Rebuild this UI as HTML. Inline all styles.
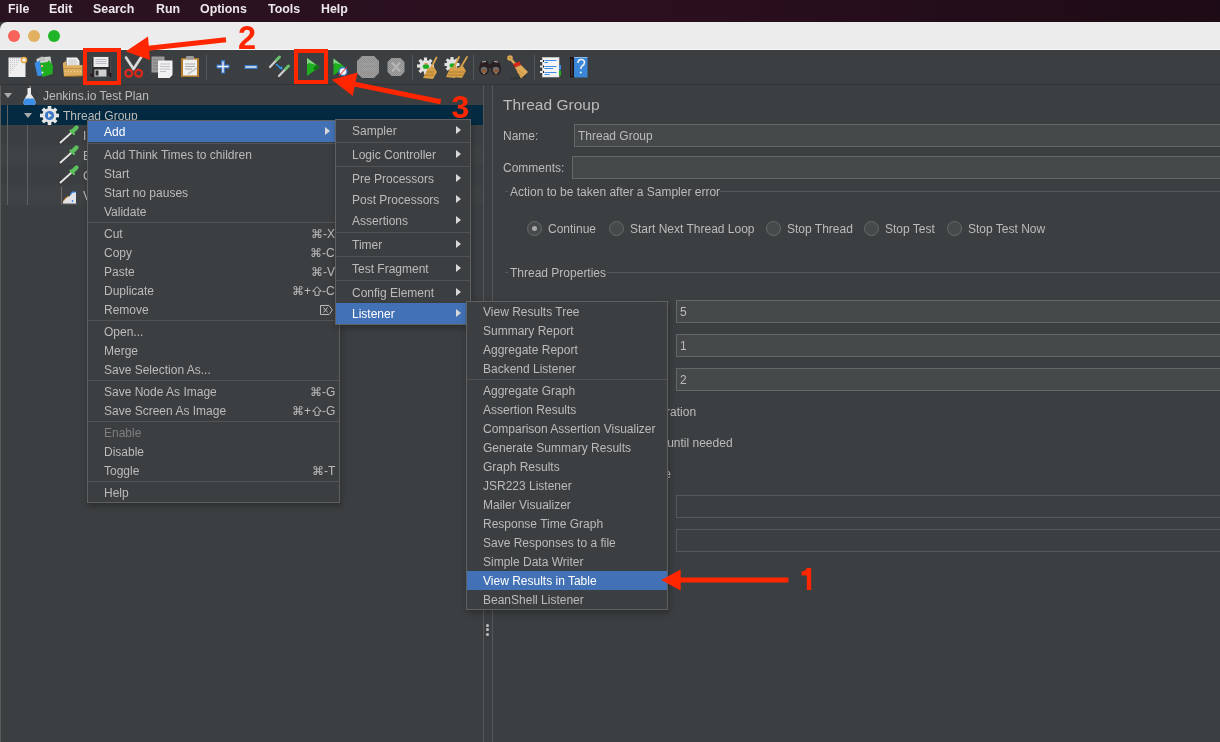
<!DOCTYPE html>
<html><head><meta charset="utf-8">
<style>
*{margin:0;padding:0;box-sizing:border-box}
html,body{width:1220px;height:742px;overflow:hidden;background:#3c3f41;-webkit-font-smoothing:antialiased;font-family:"Liberation Sans",sans-serif;color:#bbbbbb;font-size:12px}
.a{position:absolute}
.t{position:absolute;white-space:nowrap;will-change:transform;font-size:12px;line-height:19px;height:19px;margin-top:1px}
#menubar{left:0;top:0;width:1220px;height:22px;background:linear-gradient(90deg,#2a1321 0%,#2b0f1f 55%,#1d0b15 100%)}
#menubar span{position:absolute;will-change:transform;top:1px;line-height:17px;font-weight:bold;font-size:12.4px;color:#ece8ea}
#titlebar{left:0;top:22px;width:1220px;height:28px;background:#ececec;border-top-left-radius:7px}
.dot{position:absolute;width:12px;height:12px;border-radius:50%;top:30px}
#toolbar{left:0;top:50px;width:1220px;height:34px;background:#3c3f41}
.sep{position:absolute;top:55px;width:1px;height:25px;background:#55585a}
.hl{background:#4272b5;color:#ffffff}
.menu{position:absolute;background:#3c3f41;border:1px solid #5e6062}
.msep{position:absolute;height:1px;background:#515355}
.field{position:absolute;background:#45494a;border:1px solid #646768}
.radio{position:absolute;width:15px;height:15px;border-radius:50%;border:1px solid #666a6a;background:#464a4a}
.arrow{position:absolute;width:0;height:0;border-top:4px solid transparent;border-bottom:4px solid transparent;border-left:5px solid #d8d8d8}
</style></head><body>
<div id="menubar" class="a">
<span style="left:8px">File</span>
<span style="left:49px">Edit</span>
<span style="left:93px">Search</span>
<span style="left:156px">Run</span>
<span style="left:200px">Options</span>
<span style="left:268px">Tools</span>
<span style="left:321px">Help</span>
</div>
<div id="titlebar" class="a"></div>
<div class="a" style="left:0;top:49px;width:1220px;height:1px;background:#f8f8f8"></div>
<div class="a" style="left:0;top:50px;width:1220px;height:1px;background:#1c1418"></div>
<div class="dot" style="left:8px;background:#f8645a"></div>
<div class="dot" style="left:28px;background:#e2b160"></div>
<div class="dot" style="left:48px;background:#1fb526"></div>
<div id="toolbar" class="a"></div>
<div class="a" style="left:0;top:84px;width:1220px;height:1px;background:#313335"></div>

<!-- TOOLBAR_ICONS -->
<svg class="a" style="left:0;top:0" width="600" height="90" viewBox="0 0 600 90">
<!-- new doc -->
<defs><pattern id="ddot" width="2" height="2" patternUnits="userSpaceOnUse"><rect width="2" height="2" fill="#ececec"/><rect width="1" height="1" fill="#c9c9cf"/></pattern></defs>
<rect x="8.5" y="57.5" width="17" height="19.5" fill="#efefef"/>
<path d="M9 58 L22 58 L9 75 Z" fill="url(#ddot)"/>
<circle cx="24" cy="60" r="2.6" fill="#f8f2e8" stroke="#e3a748" stroke-width="1.5"/>
<!-- templates -->
<path d="M36.5 59 L42 56.5 L47 58 L47 63 L37 64 Z" fill="#d6d6d6"/>
<path d="M44 57 L50.5 56.5 L51.5 64 L45 64 Z" fill="#cfcfcf"/>
<path d="M38 58.5 L44 57.5 M39 60.5 L45 59.5" stroke="#9a9a9a" stroke-width="0.8"/>
<path d="M34.5 63 L40 60.5 L42.5 75.5 L37.5 76 Z" fill="#3a8ee6"/>
<path d="M40 63 L47.5 62 L49 60 L53 66 L52.5 74 L42.5 77 Z" fill="#1fae22"/>
<circle cx="42.5" cy="72.5" r="0.9" fill="#fff"/>
<rect x="41" y="65" width="2" height="2" fill="#f0b890"/>
<!-- open -->
<path d="M66.5 57.5 L77 57.5 L79.5 61 L79.5 67 L66.5 67 Z" fill="#f2f2f2"/>
<path d="M68.5 60h8M68.5 62h9M68.5 64h9" stroke="#b8b8b8" stroke-width="0.8"/>
<path d="M63 65.5 L82.5 65 L82.5 76 L64 77 Z" fill="#dcae5e"/>
<path d="M63 63 L66 61 L66 66 L63 66 Z" fill="#dcae5e"/>
<path d="M64 68.5 L82 68.5" stroke="#c8944a" stroke-width="1"/>
<path d="M65 71.5h1M68 71.5h1M71 71.5h1M74 71.5h1M77 71.5h1M80 71.5h1" stroke="#f2d49a" stroke-width="1"/>
<path d="M64 76.5 L82 76" stroke="#8a5f22" stroke-width="1.2"/>
<!-- save -->
<path d="M91.5 57 L110.5 57 L110.5 76.5 L91.5 76.5 Z" fill="#2c2c2e" stroke="#555" stroke-width="0.6"/>
<rect x="93.5" y="57" width="15" height="10" fill="#ececec"/>
<path d="M95.5 59.5h11M95.5 61.5h11M95.5 63.5h11" stroke="#a8a8b8" stroke-width="0.7"/>
<rect x="94.5" y="69.5" width="12" height="7" fill="#d0d0d0"/>
<rect x="95.5" y="70.5" width="3" height="5" fill="#2e2e2e"/>
<path d="M90.5 74 L93 77 M110.5 73 L110.5 77" stroke="#200810" stroke-width="1.2"/>
<!-- scissors -->
<path d="M126 57.5 L133.5 69 M141 57.5 L133.5 69" stroke="#555" stroke-width="3.6" stroke-linecap="round"/>
<path d="M126 57.5 L133.5 69 M141 57.5 L133.5 69" stroke="#dcdcdc" stroke-width="2.4" stroke-linecap="round"/>
<circle cx="128.8" cy="73.2" r="3.4" fill="none" stroke="#e0281a" stroke-width="2.2"/>
<circle cx="138.6" cy="73.2" r="3.4" fill="none" stroke="#e0281a" stroke-width="2.2"/>
<!-- copy -->
<rect x="151.5" y="56.5" width="13" height="16" fill="#9a9a9a"/>
<path d="M153 60h9M153 63h9M153 66h9M153 69h9" stroke="#7e7e7e" stroke-width="1"/>
<path d="M158 60.5 L172.5 60.5 L172.5 75 L169.5 78 L158 78 Z" fill="#f2f2f2"/>
<path d="M160 64h10M160 66.5h10M160 69h10M160 71.5h6" stroke="#b0b0bb" stroke-width="0.8"/>
<!-- paste -->
<rect x="181" y="58" width="18" height="19" fill="#b07a2c"/>
<rect x="183" y="59.5" width="14" height="16" fill="#f0f0f0"/>
<rect x="186" y="56" width="8" height="3.5" rx="1" fill="#9a9a9a"/>
<path d="M185 64h10M185 66.5h10M185 69h7" stroke="#a8a8a8" stroke-width="1"/>
<path d="M188 74 L197 68" stroke="#c8c8c8" stroke-width="2"/>
<!-- sep -->
<rect x="206" y="55" width="1" height="25" fill="#55585a"/>
<!-- plus -->
<path d="M216.5 66.5h13M223 60v13.5" stroke="#3a78c8" stroke-width="4"/>
<path d="M217.5 66.5h11M223 61.5v11" stroke="#f4f4f4" stroke-width="1.4"/>
<!-- minus -->
<rect x="244.5" y="65" width="13" height="4" fill="#3a78c8"/>
<rect x="245.5" y="66.3" width="11" height="1.4" fill="#f4f4f4"/>
<!-- toggle pipettes -->
<path d="M270 67 L277 59.5" stroke="#d0d0d0" stroke-width="2.2" stroke-linecap="round"/>
<path d="M276.5 60 L279.5 57" stroke="#6ac36a" stroke-width="3" stroke-linecap="round"/>
<path d="M279 76 L286 68.5" stroke="#d0d0d0" stroke-width="2.2" stroke-linecap="round"/>
<path d="M285.5 69 L288.5 66" stroke="#6ac36a" stroke-width="3" stroke-linecap="round"/>
<path d="M276 64 L281 68.5" stroke="#2f9af0" stroke-width="1.2"/>
<path d="M279 69 L282.5 69.5 L282 66 Z" fill="#2f9af0"/>
<!-- play -->
<path d="M307 58 L319.5 67 L307 76 Z" fill="#1fae1f"/>
<path d="M307 58 L316.5 65 L309 63 L307 64 Z" fill="#86cf86"/>
<path d="M313 68.5 L316 65 L319.5 67 L315.5 70.5 Z" fill="#0b760b"/>
<!-- start no pauses -->
<path d="M333.5 58.5 L345 67 L333.5 75.5 Z" fill="#1fae1f"/>
<path d="M333.5 58.5 L341 64.5 L335 63 L333.5 64 Z" fill="#86cf86"/>
<circle cx="343" cy="71.5" r="4" fill="#f4f4f4" stroke="#3a78c8" stroke-width="1.3"/>
<path d="M339 76 L347 67" stroke="#e02020" stroke-width="1"/>
<!-- stop octagon -->
<defs><pattern id="dith" width="2" height="2" patternUnits="userSpaceOnUse"><rect width="2" height="2" fill="#a2a2a2"/><rect width="1" height="1" fill="#8a8a8a"/><rect x="1" y="1" width="1" height="1" fill="#8e8e8e"/></pattern></defs>
<path d="M362 56 L374 56 L379 61 L379 73 L374 78 L362 78 L357 73 L357 61 Z" fill="url(#dith)"/>
<path d="M361 64h14M361 69h14" stroke="#b0b0b0" stroke-width="0.8" opacity="0.6"/>
<!-- shutdown -->
<path d="M391.5 58 L400.5 58 L404.5 62 L404.5 72 L400.5 76 L391.5 76 L387.5 72 L387.5 62 Z" fill="url(#dith)"/>
<path d="M392 62.5 L400 71.5 M400 62.5 L392 71.5" stroke="#b4b4b4" stroke-width="2.4"/>
<!-- sep -->
<rect x="412" y="55" width="1" height="25" fill="#55585a"/>
<!-- clear -->
<g transform="translate(425.5,66)">
<g fill="#e2e2e2">
<circle r="6"/>
<rect x="-1.6" y="-8.5" width="3.2" height="17"/>
<rect x="-8.5" y="-1.6" width="17" height="3.2"/>
<rect x="-1.6" y="-8.5" width="3.2" height="17" transform="rotate(45)"/>
<rect x="-1.6" y="-8.5" width="3.2" height="17" transform="rotate(-45)"/>
</g>
<ellipse cx="0.5" cy="0.5" rx="3.2" ry="2.5" fill="#1fae22"/>
<rect x="-1" y="-3" width="3" height="1.5" fill="#e08a50"/>
</g>
<path d="M436.5 57.5 L431 68" stroke="#d9a44e" stroke-width="1.8" stroke-linecap="round"/>
<path d="M428 68 L434 67 L437 72 L433 79 L423 78 Z" fill="#d6a04a"/>
<path d="M427 72 L434 72 M425 75 L434 75" stroke="#a87428" stroke-width="0.8"/>
<!-- clear all -->
<g transform="translate(452,64.5)">
<g fill="#e2e2e2">
<circle r="5.5"/>
<rect x="-1.5" y="-7.5" width="3" height="15"/>
<rect x="-7.5" y="-1.5" width="15" height="3"/>
<rect x="-1.5" y="-7.5" width="3" height="15" transform="rotate(45)"/>
<rect x="-1.5" y="-7.5" width="3" height="15" transform="rotate(-45)"/>
</g>
<ellipse cx="0.5" cy="1" rx="3" ry="2.3" fill="#1fae22"/>
</g>
<path d="M459 57 L454 67 M467 57 L461 67" stroke="#d9a44e" stroke-width="1.8" stroke-linecap="round"/>
<path d="M450 68 L456 66 L458 71 L455 78 L446 77 Z" fill="#d6a04a"/>
<path d="M457 68 L463 66 L466 71 L462 78 L453 77 Z" fill="#d6a04a"/>
<path d="M449 72 L465 72 M448 75 L464 75" stroke="#a87428" stroke-width="0.8"/>
<!-- sep -->
<rect x="473" y="55" width="1" height="25" fill="#55585a"/>
<!-- binoculars -->
<path d="M481 61.5 L487 60.5 L489 64 L491 64 L493 60.5 L499 61.5 L501 68 L479 68 Z" fill="#2a2024"/>
<path d="M482 62 L486 61.5 M494 61.5 L498 62" stroke="#b8b8b8" stroke-width="1.2"/>
<circle cx="484" cy="70" r="5" fill="#2a2024"/>
<circle cx="496" cy="70" r="5" fill="#2a2024"/>
<circle cx="484" cy="70" r="3.3" fill="#6a6a6a"/>
<circle cx="496" cy="70" r="3.3" fill="#6a6a6a"/>
<path d="M481.5 71 Q484 68 486.5 71 Q484 73 481.5 71 Z" fill="#a0521c"/>
<path d="M493.5 71 Q496 68 498.5 71 Q496 73 493.5 71 Z" fill="#a0521c"/>
<circle cx="484" cy="73.5" r="0.8" fill="#e8a040"/>
<circle cx="496" cy="73.5" r="0.8" fill="#e8a040"/>
<!-- broom -->
<ellipse cx="535" cy="77" rx="0" ry="0" fill="none"/>
<path d="M510 78.5 Q516 80 527 76" stroke="#2e3133" stroke-width="2" opacity="0.5"/>
<circle cx="510" cy="58" r="2.8" fill="#dcaa58"/><circle cx="510" cy="58" r="1" fill="#b88838"/>
<path d="M511.5 60 L516 65" stroke="#dcaa58" stroke-width="2.6"/>
<path d="M513 64 L519.5 61.5 L521 65 L515 67.5 Z" fill="#d42a18"/>
<path d="M515 67.5 L521 65 L528 72 L521 78.5 Z" fill="#dcaa58"/>
<path d="M516 69 L524 74 M517 72 L523 77" stroke="#c08a38" stroke-width="0.7"/>
<!-- sep -->
<rect x="534" y="55" width="1" height="25" fill="#55585a"/>
<!-- notebook -->
<rect x="542.5" y="57.5" width="16.5" height="19.5" fill="#f4f4f4" stroke="#d6d6d6" stroke-width="0.6"/>
<path d="M544.5 60.5h12M544.5 62.5h3.5M544.5 66.5h12M544.5 68.5h8.5M544.5 72.5h12M544.5 74.5h5" stroke="#3a8ee6" stroke-width="1"/>
<path d="M540 61h3.5M540 66.5h3.5M540 72h3.5" stroke="#e4e4e4" stroke-width="2.2"/>
<path d="M543.5 60v2M543.5 65.5v2M543.5 71v2" stroke="#222" stroke-width="1"/>
<rect x="559" y="65" width="2" height="4.5" fill="#3a8ee6"/>
<rect x="559" y="70.5" width="2" height="5" fill="#1fae22"/>
<!-- help -->
<rect x="570" y="57" width="5" height="20.5" fill="#1e1216"/>
<rect x="571" y="59" width="1.5" height="17" fill="#3a3a3a"/>
<rect x="574" y="57" width="13.5" height="20.5" fill="#3a86d8"/>
<rect x="574" y="57" width="13.5" height="1" fill="#8ab8e8"/>
<path d="M578 63 Q578 59.5 581 59.5 Q584.5 59.5 584.5 62.5 Q584.5 64.5 582 66 Q580.8 67 580.8 69" fill="none" stroke="#f0f0f0" stroke-width="1.6"/>
<circle cx="580.8" cy="72.5" r="1.1" fill="#f0f0f0"/>
</svg>

<!-- /TOOLBAR_ICONS -->

<!-- tree -->
<div class="a" style="left:0;top:85px;width:1px;height:657px;background:#5a5c5a"></div>
<div class="a" style="left:1px;top:105px;width:482px;height:20px;background:#032a40"></div>
<div class="a" style="left:1px;top:145px;width:482px;height:20px;background:#3f4244"></div>
<div class="a" style="left:1px;top:185px;width:482px;height:20px;background:#3f4244"></div>
<div class="a" style="left:7px;top:105px;width:1px;height:100px;background:#5e6161"></div>
<div class="a" style="left:27px;top:125px;width:1px;height:80px;background:#5e6161"></div>
<div class="a" style="left:4px;top:93px;width:0;height:0;border-left:4px solid transparent;border-right:4px solid transparent;border-top:5px solid #a9abad"></div>
<div class="a" style="left:24px;top:113px;width:0;height:0;border-left:4px solid transparent;border-right:4px solid transparent;border-top:5px solid #a9abad"></div>
<div class="t" style="left:43px;top:86px">Jenkins.io Test Plan</div>
<div class="t" style="left:63px;top:106px">Thread Group</div>
<div class="t" style="left:83px;top:126px">I</div>
<div class="t" style="left:83px;top:146px">B</div>
<div class="t" style="left:83px;top:166px">C</div>
<div class="t" style="left:83px;top:186px">V</div>

<!-- TREE_ICONS -->
<svg class="a" style="left:0;top:84px" width="90" height="125" viewBox="0 84 90 125">
<!-- flask -->
<path d="M29.5 86.5 L31 87.5" stroke="#cfcfcf" stroke-width="1"/>
<path d="M27.5 88 L31 88 L31 94 Q35.5 100 35.5 102.5 Q35.5 105 33 105 L26 105 Q23.5 105 23.5 102.5 Q23.5 100 27.5 94 Z" fill="#e6e6e6"/>
<path d="M25.3 98.5 L33.7 98.5 Q35.5 101 35.5 102.5 Q35.5 105 33 105 L26 105 Q23.5 105 23.5 102.5 Q23.5 101 25.3 98.5 Z" fill="#3a8ee6"/>
<path d="M29 89 L29 96" stroke="#ffffff" stroke-width="1" opacity="0.7"/>
<!-- gear -->
<g transform="translate(49.5,115.5)">
<g fill="#e6e6e6">
<circle r="7.2"/>
<rect x="-1.8" y="-9.5" width="3.6" height="19"/>
<rect x="-9.5" y="-1.8" width="19" height="3.6"/>
<rect x="-1.8" y="-9.5" width="3.6" height="19" transform="rotate(45)"/>
<rect x="-1.8" y="-9.5" width="3.6" height="19" transform="rotate(-45)"/>
</g>
<circle r="4.6" fill="#3a78c8"/>
<path d="M-1.5 -2.5 L2.5 0 L-1.5 2.5 Z" fill="#e0e0e0"/>
</g>
<!-- pipettes -->
<g id="pip">
<path d="M60 143 L70.5 133.5" stroke="#2a2a2a" stroke-width="3.2" stroke-linecap="round" opacity="0.6"/>
<path d="M60.5 142.5 L71 133" stroke="#e4e4e4" stroke-width="2" stroke-linecap="round"/>
<path d="M62 139.5 L69 133.5" stroke="#777" stroke-width="0.5"/>
<path d="M70.5 130.5 L74 134" stroke="#5cbf5c" stroke-width="2.2" stroke-linecap="round"/>
<path d="M73 131 L76.5 127.5" stroke="#5cbf5c" stroke-width="4.2" stroke-linecap="round"/>
</g>
<use href="#pip" y="20"/>
<use href="#pip" y="40"/>
<!-- graph -->
<rect x="61" y="187" width="1" height="17" fill="#6a6a6a"/>
<rect x="61" y="203.5" width="16" height="0.8" fill="#6a6a6a"/>
<path d="M63 203.5 L63 201.5 Q65 197.5 68 196.5 L69.5 196.5 L71 194 L72.5 192 L76 192 L76 203.5 Z" fill="#e4e4e8"/>
<path d="M63.5 201 Q65 198 68 196.5" stroke="#d08020" stroke-width="1" fill="none"/>
<path d="M70.5 194.5 L72.5 192.2 L75.5 192.2" stroke="#3a8ee6" stroke-width="1.2" fill="none"/>
<path d="M72.5 200 L72.5 202" stroke="#3a8ee6" stroke-width="1.2"/>
</svg>

<!-- /TREE_ICONS -->

<!-- splitter -->
<div class="a" style="left:483px;top:85px;width:1px;height:657px;background:#55585a"></div>
<div class="a" style="left:492px;top:85px;width:1px;height:657px;background:#55585a"></div>
<div class="a" style="left:486px;top:624px;width:3px;height:3px;border-radius:50%;background:#c0c0c0"></div>
<div class="a" style="left:486px;top:628px;width:3px;height:3px;border-radius:50%;background:#c0c0c0"></div>
<div class="a" style="left:486px;top:633px;width:3px;height:3px;border-radius:50%;background:#c0c0c0"></div>

<!-- right panel -->
<div class="t" style="left:503px;top:94px;font-size:15.5px;line-height:20px;height:20px">Thread Group</div>
<div class="t" style="left:503px;top:126px">Name:</div>
<div class="field" style="left:574px;top:124px;width:660px;height:23px"></div>
<div class="t" style="left:578px;top:126px">Thread Group</div>
<div class="t" style="left:503px;top:158px">Comments:</div>
<div class="field" style="left:572px;top:156px;width:660px;height:23px"></div>
<div class="a" style="left:505px;top:191px;width:3px;height:1px;background:#55585a"></div>
<div class="t" style="left:510px;top:182px">Action to be taken after a Sampler error</div>
<div class="a" style="left:720px;top:191px;width:500px;height:1px;background:#55585a"></div>
<div class="radio" style="left:527px;top:221px"></div>
<div class="a" style="left:532px;top:226px;width:5px;height:5px;border-radius:50%;background:#a8a8a8"></div>
<div class="t" style="left:548px;top:219px">Continue</div>
<div class="radio" style="left:609px;top:221px"></div>
<div class="t" style="left:630px;top:219px">Start Next Thread Loop</div>
<div class="radio" style="left:766px;top:221px"></div>
<div class="t" style="left:787px;top:219px">Stop Thread</div>
<div class="radio" style="left:864px;top:221px"></div>
<div class="t" style="left:885px;top:219px">Stop Test</div>
<div class="radio" style="left:947px;top:221px"></div>
<div class="t" style="left:968px;top:219px">Stop Test Now</div>
<div class="a" style="left:505px;top:272px;width:3px;height:1px;background:#55585a"></div>
<div class="t" style="left:510px;top:263px">Thread Properties</div>
<div class="a" style="left:607px;top:272px;width:613px;height:1px;background:#55585a"></div>
<div class="field" style="left:676px;top:300px;width:600px;height:23px"></div>
<div class="t" style="left:680px;top:302px">5</div>
<div class="field" style="left:676px;top:334px;width:600px;height:23px"></div>
<div class="t" style="left:680px;top:336px">1</div>
<div class="field" style="left:676px;top:368px;width:600px;height:23px"></div>
<div class="t" style="left:680px;top:370px">2</div>
<div class="t" style="right:524px;top:402px">Same user on each iteration</div>
<div class="t" style="right:487px;top:433px">Delay Thread creation until needed</div>
<div class="t" style="right:549px;top:464px">Specify Thread lifetime</div>
<div class="a" style="left:676px;top:495px;width:600px;height:23px;border:1px solid #56595b"></div>
<div class="a" style="left:676px;top:529px;width:600px;height:23px;border:1px solid #56595b"></div>

<!-- MENUS -->
<div class="menu" style="left:87px;top:120px;width:253px;height:383px;box-shadow:1px 3px 6px rgba(0,0,0,0.28)"></div>
<div class="a hl" style="left:88px;top:121px;width:251px;height:21px"></div>
<div class="t " style="left:104px;top:121px;line-height:21px;height:21px;color:#fff">Add</div>
<div class="arrow" style="left:325px;top:127px"></div>
<div class="msep" style="left:88px;top:143px;width:251px"></div>
<div class="t " style="left:104px;top:145px;line-height:19px;height:19px;">Add Think Times to children</div>
<div class="t " style="left:104px;top:164px;line-height:19px;height:19px;">Start</div>
<div class="t " style="left:104px;top:183px;line-height:19px;height:19px;">Start no pauses</div>
<div class="t " style="left:104px;top:202px;line-height:19px;height:19px;">Validate</div>
<div class="msep" style="left:88px;top:222px;width:251px"></div>
<div class="t " style="left:104px;top:224px;line-height:19px;height:19px;">Cut</div>
<div class="t sc" style="right:885px;top:224px;line-height:19px;height:19px">&#8984;-X</div>
<div class="t " style="left:104px;top:243px;line-height:19px;height:19px;">Copy</div>
<div class="t sc" style="right:885px;top:243px;line-height:19px;height:19px">&#8984;-C</div>
<div class="t " style="left:104px;top:262px;line-height:19px;height:19px;">Paste</div>
<div class="t sc" style="right:885px;top:262px;line-height:19px;height:19px">&#8984;-V</div>
<div class="t " style="left:104px;top:281px;line-height:19px;height:19px;">Duplicate</div>
<div class="t sc" style="right:885px;top:281px;line-height:19px;height:19px">&#8984;+<svg width="10" height="10" viewBox="0 0 10 10" style="vertical-align:-1px;margin:0 0.5px"><path d="M5 0.7 L9.4 5.2 L7 5.2 L7 9.4 L3 9.4 L3 5.2 L0.6 5.2 Z" fill="none" stroke="#bbbbbb" stroke-width="1"/></svg>-C</div>
<div class="t " style="left:104px;top:300px;line-height:19px;height:19px;">Remove</div>
<div class="t sc" style="right:885px;top:300px;line-height:19px;height:19px"><svg width="13" height="10" viewBox="0 0 13 10" style="vertical-align:-1px;margin-right:2px"><path d="M0.5 0.5 H9 L12.4 5 L9 9.5 H0.5 Z" fill="none" stroke="#bbbbbb" stroke-width="1"/><path d="M3.5 2.5 L7.5 7.5 M7.5 2.5 L3.5 7.5" stroke="#bbbbbb" stroke-width="1"/></svg></div>
<div class="msep" style="left:88px;top:320px;width:251px"></div>
<div class="t " style="left:104px;top:322px;line-height:19px;height:19px;">Open...</div>
<div class="t " style="left:104px;top:341px;line-height:19px;height:19px;">Merge</div>
<div class="t " style="left:104px;top:360px;line-height:19px;height:19px;">Save Selection As...</div>
<div class="msep" style="left:88px;top:380px;width:251px"></div>
<div class="t " style="left:104px;top:382px;line-height:19px;height:19px;">Save Node As Image</div>
<div class="t sc" style="right:885px;top:382px;line-height:19px;height:19px">&#8984;-G</div>
<div class="t " style="left:104px;top:401px;line-height:19px;height:19px;">Save Screen As Image</div>
<div class="t sc" style="right:885px;top:401px;line-height:19px;height:19px">&#8984;+<svg width="10" height="10" viewBox="0 0 10 10" style="vertical-align:-1px;margin:0 0.5px"><path d="M5 0.7 L9.4 5.2 L7 5.2 L7 9.4 L3 9.4 L3 5.2 L0.6 5.2 Z" fill="none" stroke="#bbbbbb" stroke-width="1"/></svg>-G</div>
<div class="msep" style="left:88px;top:421px;width:251px"></div>
<div class="t " style="left:104px;top:423px;line-height:19px;height:19px;color:#7d7f80">Enable</div>
<div class="t " style="left:104px;top:442px;line-height:19px;height:19px;">Disable</div>
<div class="t " style="left:104px;top:461px;line-height:19px;height:19px;">Toggle</div>
<div class="t sc" style="right:885px;top:461px;line-height:19px;height:19px">&#8984;-T</div>
<div class="msep" style="left:88px;top:481px;width:251px"></div>
<div class="t " style="left:104px;top:483px;line-height:19px;height:19px;">Help</div>
<div class="menu" style="left:335px;top:119px;width:136px;height:206px;box-shadow:1px 3px 6px rgba(0,0,0,0.28)"></div>
<div class="t " style="left:352px;top:120px;line-height:21px;height:21px;">Sampler</div>
<div class="arrow" style="left:456px;top:126px"></div>
<div class="t " style="left:352px;top:144px;line-height:21px;height:21px;">Logic Controller</div>
<div class="arrow" style="left:456px;top:150px"></div>
<div class="t " style="left:352px;top:168px;line-height:21px;height:21px;">Pre Processors</div>
<div class="arrow" style="left:456px;top:174px"></div>
<div class="t " style="left:352px;top:189px;line-height:21px;height:21px;">Post Processors</div>
<div class="arrow" style="left:456px;top:195px"></div>
<div class="t " style="left:352px;top:210px;line-height:21px;height:21px;">Assertions</div>
<div class="arrow" style="left:456px;top:216px"></div>
<div class="t " style="left:352px;top:234px;line-height:21px;height:21px;">Timer</div>
<div class="arrow" style="left:456px;top:240px"></div>
<div class="t " style="left:352px;top:258px;line-height:21px;height:21px;">Test Fragment</div>
<div class="arrow" style="left:456px;top:264px"></div>
<div class="t " style="left:352px;top:282px;line-height:21px;height:21px;">Config Element</div>
<div class="arrow" style="left:456px;top:288px"></div>
<div class="a hl" style="left:336px;top:303px;width:134px;height:21px"></div>
<div class="t " style="left:352px;top:303px;line-height:21px;height:21px;color:#fff">Listener</div>
<div class="arrow" style="left:456px;top:309px"></div>
<div class="msep" style="left:336px;top:142px;width:134px"></div>
<div class="msep" style="left:336px;top:166px;width:134px"></div>
<div class="msep" style="left:336px;top:232px;width:134px"></div>
<div class="msep" style="left:336px;top:256px;width:134px"></div>
<div class="msep" style="left:336px;top:280px;width:134px"></div>
<div class="menu" style="left:466px;top:301px;width:202px;height:309px;box-shadow:1px 3px 6px rgba(0,0,0,0.28)"></div>
<div class="t " style="left:483px;top:302px;line-height:19px;height:19px;">View Results Tree</div>
<div class="t " style="left:483px;top:321px;line-height:19px;height:19px;">Summary Report</div>
<div class="t " style="left:483px;top:340px;line-height:19px;height:19px;">Aggregate Report</div>
<div class="t " style="left:483px;top:359px;line-height:19px;height:19px;">Backend Listener</div>
<div class="msep" style="left:467px;top:379px;width:200px"></div>
<div class="t " style="left:483px;top:381px;line-height:19px;height:19px;">Aggregate Graph</div>
<div class="t " style="left:483px;top:400px;line-height:19px;height:19px;">Assertion Results</div>
<div class="t " style="left:483px;top:419px;line-height:19px;height:19px;">Comparison Assertion Visualizer</div>
<div class="t " style="left:483px;top:438px;line-height:19px;height:19px;">Generate Summary Results</div>
<div class="t " style="left:483px;top:457px;line-height:19px;height:19px;">Graph Results</div>
<div class="t " style="left:483px;top:476px;line-height:19px;height:19px;">JSR223 Listener</div>
<div class="t " style="left:483px;top:495px;line-height:19px;height:19px;">Mailer Visualizer</div>
<div class="t " style="left:483px;top:514px;line-height:19px;height:19px;">Response Time Graph</div>
<div class="t " style="left:483px;top:533px;line-height:19px;height:19px;">Save Responses to a file</div>
<div class="t " style="left:483px;top:552px;line-height:19px;height:19px;">Simple Data Writer</div>
<div class="a hl" style="left:467px;top:571px;width:200px;height:19px"></div>
<div class="t " style="left:483px;top:571px;line-height:19px;height:19px;color:#fff">View Results in Table</div>
<div class="t " style="left:483px;top:590px;line-height:19px;height:19px;">BeanShell Listener</div>
<!-- /MENUS -->

<!-- ANNOTATIONS -->
<svg class="a" style="left:0;top:0" width="1220" height="742" viewBox="0 0 1220 742">
<g fill="none" stroke="#ff2600">
<rect x="85" y="50" width="34" height="33" stroke-width="4"/>
<rect x="296" y="51" width="30" height="31" stroke-width="4"/>
<path d="M146 48.5 L226 39.7" stroke-width="5"/>
<path d="M352 83.6 L440.7 101.7" stroke-width="5"/>
<path d="M678 580 L788.4 580" stroke-width="5"/>
</g>
<g fill="#ff2600">
<polygon points="125.7,51.5 148,36.4 150,60"/>
<polygon points="331.8,79.7 357.5,72.5 352.7,96"/>
<polygon points="661.3,580 680.7,569.5 680.7,590.5"/>
<text x="238" y="48.8" font-family="Liberation Sans" font-weight="bold" font-size="32.5">2</text>
<text x="451.5" y="117.9" font-family="Liberation Sans" font-weight="bold" font-size="32">3</text>
<path d="M806.8 568 L811.2 568 L811.2 590 L806.8 590 L806.8 575.6 L801.5 575.6 L801.5 571.6 Q805.5 571.2 806.8 568 Z"/>
</g>
</svg>

<!-- /ANNOTATIONS -->
</body></html>
